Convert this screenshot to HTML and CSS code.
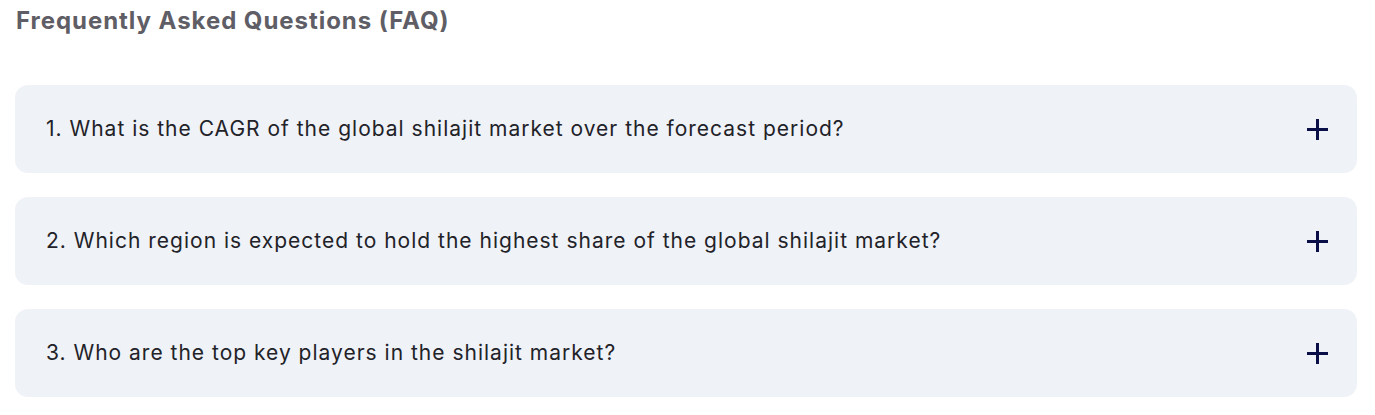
FILE: index.html
```html
<!DOCTYPE html>
<html lang="en">
<head>
    <meta charset="UTF-8">
    <meta name="viewport" content="width=device-width, initial-scale=1.0">
    <title>FAQ</title>
    <link rel="stylesheet" href="styles.css">
</head>
<body>
    <section class="faq">
        <h2 class="faq-title">Frequently Asked Questions (FAQ)</h2>

        <div class="faq-list">
            <div class="faq-item">
                <span class="faq-question">1. What is the CAGR of the global shilajit market over the forecast period?</span>
                <span class="faq-toggle"></span>
            </div>
            <div class="faq-item">
                <span class="faq-question">2. Which region is expected to hold the highest share of the global shilajit market?</span>
                <span class="faq-toggle"></span>
            </div>
            <div class="faq-item">
                <span class="faq-question">3. Who are the top key players in the shilajit market?</span>
                <span class="faq-toggle"></span>
            </div>
        </div>
    </section>
</body>
</html>
```

FILE: styles.css
```css
body {
    margin: 0;
    background: #fff;
    font-family: Inter, "Open Sans", sans-serif;
}

.faq {
    padding: 5px 18px 0 15px;
}

.faq-title {
    margin: 0 0 0 1px;
    font-family: Inter, sans-serif;
    font-size: 24px;
    font-weight: 700;
    line-height: 32px;
    letter-spacing: 0.95px;
    color: #5f5e66;
}

.faq-list {
    display: flex;
    flex-direction: column;
    gap: 24px;
    margin-top: 48px;
}

.faq-item {
    display: flex;
    align-items: center;
    justify-content: space-between;
    height: 88px;
    padding: 0 29px 0 31px;
    background: #eff2f7;
    border-radius: 13px;
}

.faq-question {
    padding-bottom: 2px;
    font-size: 21px;
    letter-spacing: 1px;
    color: #222228;
}

/* the plus sign */
.faq-toggle {
    position: relative;
    width: 21px;
    height: 21px;
}

.faq-toggle::before,
.faq-toggle::after {
    content: "";
    position: absolute;
    background: #0b0f47;
}

.faq-toggle::before {
    left: 0;
    top: 9px;
    width: 21px;
    height: 3px;
}

.faq-toggle::after {
    left: 9px;
    top: 0;
    width: 3px;
    height: 21px;
}
```
